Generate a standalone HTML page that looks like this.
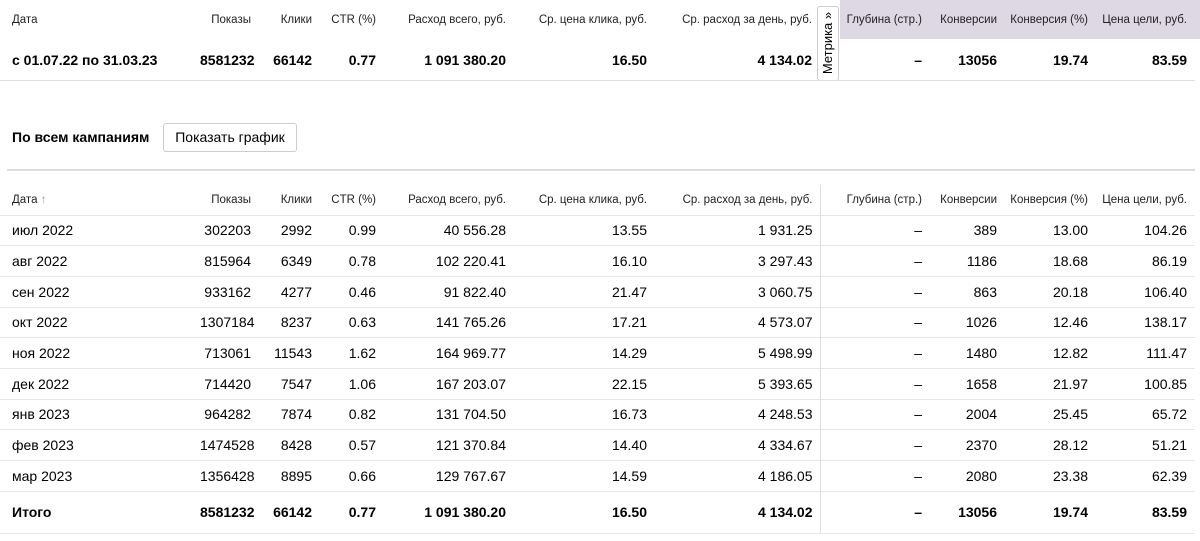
<!DOCTYPE html><html><head><meta charset="utf-8"><style>
body{margin:0;width:1200px;height:541px;background:#fff;font-family:"Liberation Sans",Arial,sans-serif;color:#000;position:relative;overflow:hidden}
table{position:absolute;left:0;border-collapse:collapse;table-layout:fixed;width:1195px}
td{padding:0;white-space:nowrap;text-align:right;overflow:visible}
td:first-child{text-align:left;padding-left:12px}
.h td{font-size:11.5px;color:#222}
.r td{font-size:14px}
.b td{font-weight:bold}
.r td,.h2 td{border-bottom:1px solid #e6e6e6}
.vl{border-right:1px solid #ddd;padding-right:7px}
</style></head><body>
<div style="position:absolute;left:840px;top:0;width:360px;height:39px;background:#ddd8e4"></div>
<table style="top:0">
<colgroup><col style="width:200px"><col style="width:51px"><col style="width:61px"><col style="width:64px"><col style="width:130px"><col style="width:141px"><col style="width:165px"><col style="width:110px"><col style="width:75px"><col style="width:91px"><col style="width:99px"><col style="width:8px"></colgroup>
<tr class="h" style="height:40px"><td>Дата</td><td>Показы</td><td>Клики</td><td>CTR (%)</td><td>Расход всего, руб.</td><td>Ср. цена клика, руб.</td><td>Ср. расход за день, руб.</td><td>Глубина (стр.)</td><td>Конверсии</td><td>Конверсия (%)</td><td>Цена цели, руб.</td><td></td></tr>
<tr class="r b" style="height:40px"><td>с 01.07.22 по 31.03.23</td><td>8581232</td><td>66142</td><td>0.77</td><td>1 091 380.20</td><td>16.50</td><td>4 134.02</td><td>–</td><td>13056</td><td>19.74</td><td>83.59</td><td></td></tr>
</table>
<div style="position:absolute;left:817px;top:6px;width:22px;height:75px;background:#fff;border:1px solid #ccc;border-radius:3px;box-sizing:border-box"><div style="position:absolute;left:2px;top:72px;transform:rotate(-90deg);transform-origin:0 0;font-size:13px;white-space:nowrap;width:72px;text-align:center">Метрика »</div></div>
<div style="position:absolute;left:12px;top:129px;font-size:14px;font-weight:bold">По всем кампаниям</div>
<div style="position:absolute;left:163px;top:123px;width:134px;height:29px;border:1px solid #ccc;border-radius:3px;box-sizing:border-box;font-size:14px;text-align:center;line-height:27px">Показать график</div>
<div style="position:absolute;left:7px;top:169px;width:1188px;height:2px;background:#ddd"></div>
<table style="top:185px">
<colgroup><col style="width:200px"><col style="width:51px"><col style="width:61px"><col style="width:64px"><col style="width:130px"><col style="width:141px"><col style="width:173px"><col style="width:102px"><col style="width:75px"><col style="width:91px"><col style="width:99px"><col style="width:8px"></colgroup>
<tr class="h h2" style="height:30px"><td>Дата <span style="color:#999">↑</span></td><td>Показы</td><td>Клики</td><td>CTR (%)</td><td>Расход всего, руб.</td><td>Ср. цена клика, руб.</td><td class="vl">Ср. расход за день, руб.</td><td>Глубина (стр.)</td><td>Конверсии</td><td>Конверсия (%)</td><td>Цена цели, руб.</td><td></td></tr>
<tr class="r" style="height:30.7px"><td>июл 2022</td><td>302203</td><td>2992</td><td>0.99</td><td>40 556.28</td><td>13.55</td><td class="vl">1 931.25</td><td>–</td><td>389</td><td>13.00</td><td>104.26</td><td></td></tr>
<tr class="r" style="height:30.7px"><td>авг 2022</td><td>815964</td><td>6349</td><td>0.78</td><td>102 220.41</td><td>16.10</td><td class="vl">3 297.43</td><td>–</td><td>1186</td><td>18.68</td><td>86.19</td><td></td></tr>
<tr class="r" style="height:30.7px"><td>сен 2022</td><td>933162</td><td>4277</td><td>0.46</td><td>91 822.40</td><td>21.47</td><td class="vl">3 060.75</td><td>–</td><td>863</td><td>20.18</td><td>106.40</td><td></td></tr>
<tr class="r" style="height:30.7px"><td>окт 2022</td><td>1307184</td><td>8237</td><td>0.63</td><td>141 765.26</td><td>17.21</td><td class="vl">4 573.07</td><td>–</td><td>1026</td><td>12.46</td><td>138.17</td><td></td></tr>
<tr class="r" style="height:30.7px"><td>ноя 2022</td><td>713061</td><td>11543</td><td>1.62</td><td>164 969.77</td><td>14.29</td><td class="vl">5 498.99</td><td>–</td><td>1480</td><td>12.82</td><td>111.47</td><td></td></tr>
<tr class="r" style="height:30.7px"><td>дек 2022</td><td>714420</td><td>7547</td><td>1.06</td><td>167 203.07</td><td>22.15</td><td class="vl">5 393.65</td><td>–</td><td>1658</td><td>21.97</td><td>100.85</td><td></td></tr>
<tr class="r" style="height:30.7px"><td>янв 2023</td><td>964282</td><td>7874</td><td>0.82</td><td>131 704.50</td><td>16.73</td><td class="vl">4 248.53</td><td>–</td><td>2004</td><td>25.45</td><td>65.72</td><td></td></tr>
<tr class="r" style="height:30.7px"><td>фев 2023</td><td>1474528</td><td>8428</td><td>0.57</td><td>121 370.84</td><td>14.40</td><td class="vl">4 334.67</td><td>–</td><td>2370</td><td>28.12</td><td>51.21</td><td></td></tr>
<tr class="r" style="height:30.7px"><td>мар 2023</td><td>1356428</td><td>8895</td><td>0.66</td><td>129 767.67</td><td>14.59</td><td class="vl">4 186.05</td><td>–</td><td>2080</td><td>23.38</td><td>62.39</td><td></td></tr>
<tr class="r b" style="height:42px"><td>Итого</td><td>8581232</td><td>66142</td><td>0.77</td><td>1 091 380.20</td><td>16.50</td><td class="vl">4 134.02</td><td>–</td><td>13056</td><td>19.74</td><td>83.59</td><td></td></tr>
</table>
<div style="position:absolute;left:0;top:80px;width:1195px;height:1px;background:#e0e0e0"></div>
</body></html>
